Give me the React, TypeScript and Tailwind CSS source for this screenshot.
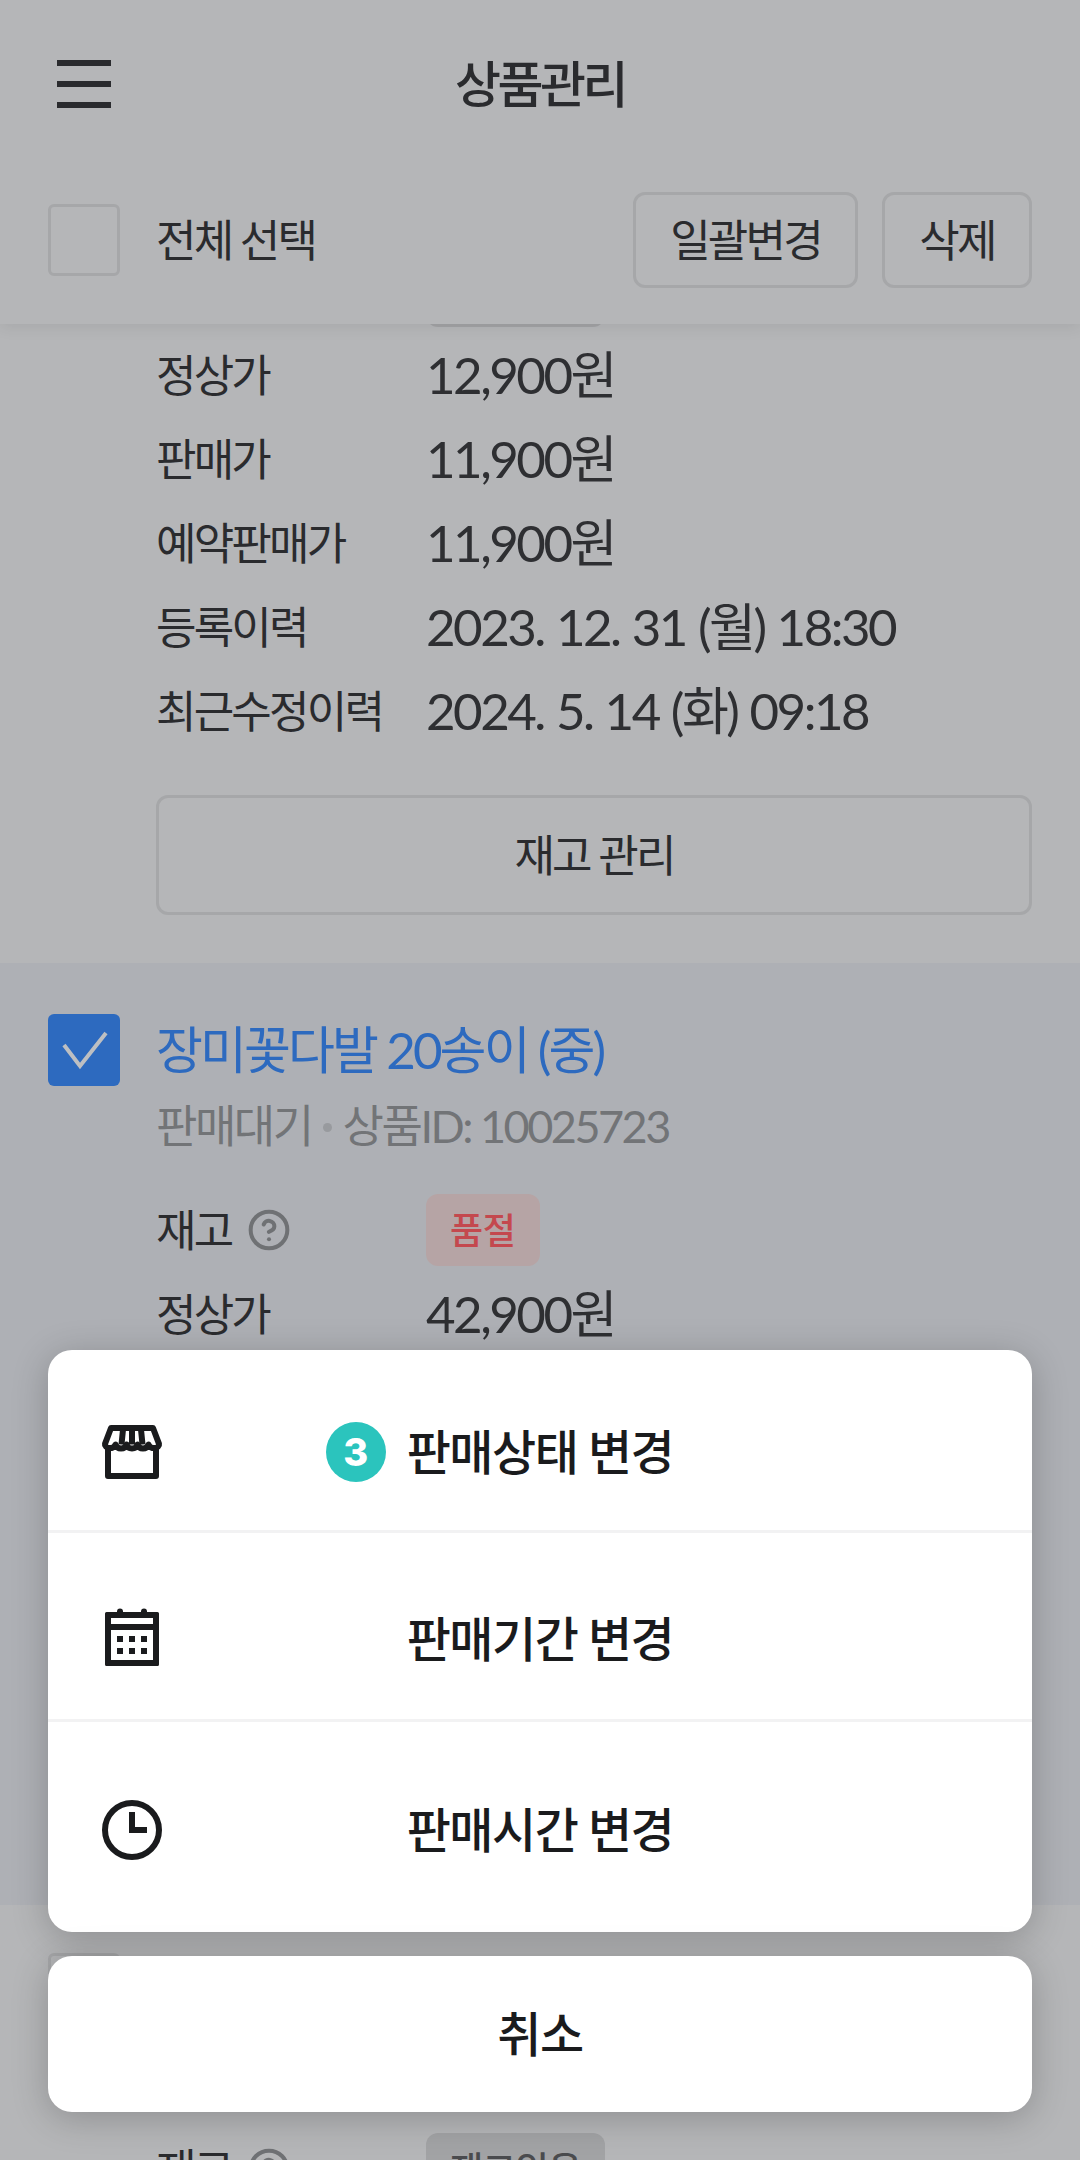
import { CircleHelp } from "lucide-react";

function Badge({ label, soldOut }: { label: string; soldOut?: boolean }) {
  return (
    <span
      className={`flex h-[72px] items-center rounded-[12px] px-[24px] text-[36px] font-medium tracking-[-0.3px] ${
        soldOut ? "bg-[#b6a4a5] text-[#c4484e]" : "bg-[#a2a3a5] text-[#4a4b4e]"
      }`}
    >
      {label}
    </span>
  );
}

function Row({ label, children }: { label: React.ReactNode; children: React.ReactNode }) {
  return (
    <div className="flex h-[72px] items-center">
      <div className="flex w-[270px] shrink-0 items-center gap-[16px] text-[44px] font-normal tracking-[-2.800px] text-[#2a2b2e]">
        {label}
      </div>
      <div className="text-[51px] tracking-[-2.500px] text-[#2e2f32] [word-spacing:1.500px]">{children}</div>
    </div>
  );
}

function StockLabel() {
  return (
    <>
      <span>재고</span>
      <CircleHelp size={44} strokeWidth={2.2} className="text-[#6f7174]" />
    </>
  );
}

function ActionRow({
  label,
  icon,
  count,
  className,
}: {
  label: string;
  icon: React.ReactNode;
  count?: number;
  className: string;
}) {
  return (
    <div className={`flex items-center pl-[48px] pr-[120px] ${className}`}>
      {icon}
      <div className="flex h-[66px] flex-1 items-center justify-center">
        <span className="relative text-[48px] font-medium tracking-[-1.500px] text-[#1a1b1d]">
          {count !== undefined && (
            <span className="absolute left-[-81px] top-1/2 flex h-[60px] w-[60px] -translate-y-1/2 items-center justify-center rounded-full bg-[#2bc4bd] font-['Inter'] text-[38px] font-extrabold tracking-normal text-white">
              {count}
            </span>
          )}
          {label}
        </span>
      </div>
    </div>
  );
}

function StoreIcon() {
  return (
    <svg width="72" height="72" viewBox="0 0 24 24" fill="none" stroke="#1a1b1d" strokeWidth="2" strokeLinejoin="round">
      <path d="M4 11v9h16v-9" />
      <path d="M5 4h14l2 5.300c.3 1.400-2.800 2.200-3.500.2-.6 1.800-3.100 1.800-3.700 0-.5 1.800-3.100 1.800-3.600 0-.6 1.800-3.100 1.800-3.700 0-.7 2-3.800 1.200-3.500-.2z" />
      <path d="M9 4.500 8.500 9.500M12 4.500v5M15 4.500l.5 5" />
    </svg>
  );
}

function CalendarIcon() {
  return (
    <svg width="72" height="72" viewBox="0 0 24 24" fill="#1a1b1d">
      <path
        fillRule="evenodd"
        d="M3 3.500a.5.5 0 0 1 .5-.5H7v-.2a1 1 0 0 1 2 0V3h6v-.2a1 1 0 0 1 2 0V3h3.500a.5.5 0 0 1 .5.5v17a.5.5 0 0 1-.5.5h-17a.5.5 0 0 1-.5-.5zM5 5v2h14V5zm0 4v10h14V9z"
      />
      <path d="M7 11h2v2H7zM11 11h2v2h-2zM15 11h2v2h-2zM7 15h2v2H7zM11 15h2v2h-2zM15 15h2v2h-2z" />
    </svg>
  );
}

function ClockIcon() {
  return (
    <svg width="72" height="72" viewBox="0 0 24 24" fill="none">
      <circle cx="12" cy="12" r="9" stroke="#1a1b1d" strokeWidth="2" />
      <path d="M11 6h2v5h4v2h-6z" fill="#1a1b1d" />
    </svg>
  );
}

export default function App() {
  return (
    <div className="relative flex h-[2160px] w-[1080px] flex-col overflow-hidden bg-[#b5b6b8] font-['Lato','Noto_Sans_CJK_KR',sans-serif]">
      {/* Header */}
      <header className="relative z-10 h-[324px] shrink-0 bg-[#b5b6b8] shadow-[0_3px_15px_rgba(0,0,0,0.08)]">
        <div className="grid h-[168px] grid-cols-[1fr_auto_1fr] items-center px-[57px]">
          <div className="flex w-[54px] flex-col gap-[15px]">
            <div className="h-[6px] bg-[#2a2b2e]" />
            <div className="h-[6px] bg-[#2a2b2e]" />
            <div className="h-[6px] bg-[#2a2b2e]" />
          </div>
          <h1 className="text-[50px] font-medium tracking-[-3.500px] text-[#2a2b2e]">상품관리</h1>
          <div />
        </div>
        <div className="flex items-center pl-[48px] pr-[48px] pt-[24px]">
          <div className="h-[72px] w-[72px] rounded-[6px] border-[3px] border-[#a6a7a9]" />
          <span className="ml-[36px] flex-1 text-[44px] font-normal tracking-[-2.800px] text-[#2a2b2e]">전체 선택</span>
          <button className="h-[96px] w-[225px] rounded-[12px] border-[3px] border-[#a6a7a9] text-[44px] font-normal tracking-[-2.800px] text-[#2a2b2e]">
            일괄변경
          </button>
          <button className="ml-[24px] h-[96px] w-[150px] rounded-[12px] border-[3px] border-[#a6a7a9] text-[44px] font-normal tracking-[-2.800px] text-[#2a2b2e]">
            삭제
          </button>
        </div>
      </header>

      {/* List, scrolled under the header */}
      <main className="mt-[-69px] flex flex-col">
        <section className="pb-[48px] pl-[156px] pr-[48px]">
          <div className="flex flex-col gap-[12px]">
            <Row label={<StockLabel />}>
              <Badge label="재고있음" />
            </Row>
            <Row label="정상가">12,900원</Row>
            <Row label="판매가">11,900원</Row>
            <Row label="예약판매가">11,900원</Row>
            <Row label="등록이력">2023. 12. 31 (월) 18:30</Row>
            <Row label="최근수정이력">2024. 5. 14 (화) 09:18</Row>
          </div>
          <button className="mt-[48px] h-[120px] w-full rounded-[12px] border-[3px] border-[#a6a7a9] text-[44px] font-normal tracking-[-2.800px] text-[#2a2b2e]">
            재고 관리
          </button>
        </section>

        <section className="flex h-[942px] shrink-0 gap-[36px] bg-[#aeb0b5] pl-[48px] pr-[48px] pt-[51px]">
          <div className="flex h-[72px] w-[72px] shrink-0 items-center justify-center rounded-[6px] bg-[#2d6abf]">
            <svg width="72" height="72" viewBox="0 0 72 72" fill="none">
              <path d="M16 31l16 21 26-33" stroke="#bdbfc2" strokeWidth="4" />
            </svg>
          </div>
          <div className="flex-1">
            <h2 className="flex h-[72px] items-center text-[51px] font-normal tracking-[-2.900px] text-[#2d6abf]">
              장미꽃다발 20송이 (중)
            </h2>
            <p className="mt-[5px] flex h-[72px] items-center text-[45px] tracking-[-2.500px] text-[#727477]">
              판매대기
              <span className="mx-[11px] h-[9px] w-[9px] rounded-full bg-[#989a9e]" />
              상품ID: 10025723
            </p>
            <div className="mt-[31px] flex flex-col gap-[12px]">
              <Row label={<StockLabel />}>
                <Badge label="품절" soldOut />
              </Row>
              <Row label="정상가">42,900원</Row>
            </div>
          </div>
        </section>

        <section className="flex gap-[36px] pl-[48px] pr-[48px] pt-[48px]">
          <div className="h-[72px] w-[72px] shrink-0 rounded-[6px] border-[3px] border-[#a6a7a9]" />
          <div className="flex-1 pt-[180px]">
            <Row label={<StockLabel />}>
              <Badge label="재고있음" />
            </Row>
          </div>
        </section>
      </main>

      {/* Action sheet */}
      <div className="absolute left-[48px] top-[1350px] flex w-[984px] flex-col gap-[24px]">
        <div className="flex flex-col divide-y-[3px] divide-[#f2f2f3] rounded-[24px] bg-white shadow-[0_6px_36px_rgba(0,0,0,0.22)]">
          <ActionRow className="h-[183px] pt-[24px]" label="판매상태 변경" icon={<StoreIcon />} count={3} />
          <ActionRow className="h-[189px] pt-[26px]" label="판매기간 변경" icon={<CalendarIcon />} />
          <ActionRow className="h-[210px] pt-[6px]" label="판매시간 변경" icon={<ClockIcon />} />
        </div>
        <button className="h-[156px] rounded-[24px] bg-white text-[48px] font-medium tracking-[-1.500px] text-[#1a1b1d] shadow-[0_6px_36px_rgba(0,0,0,0.22)]">
          취소
        </button>
      </div>
    </div>
  );
}
